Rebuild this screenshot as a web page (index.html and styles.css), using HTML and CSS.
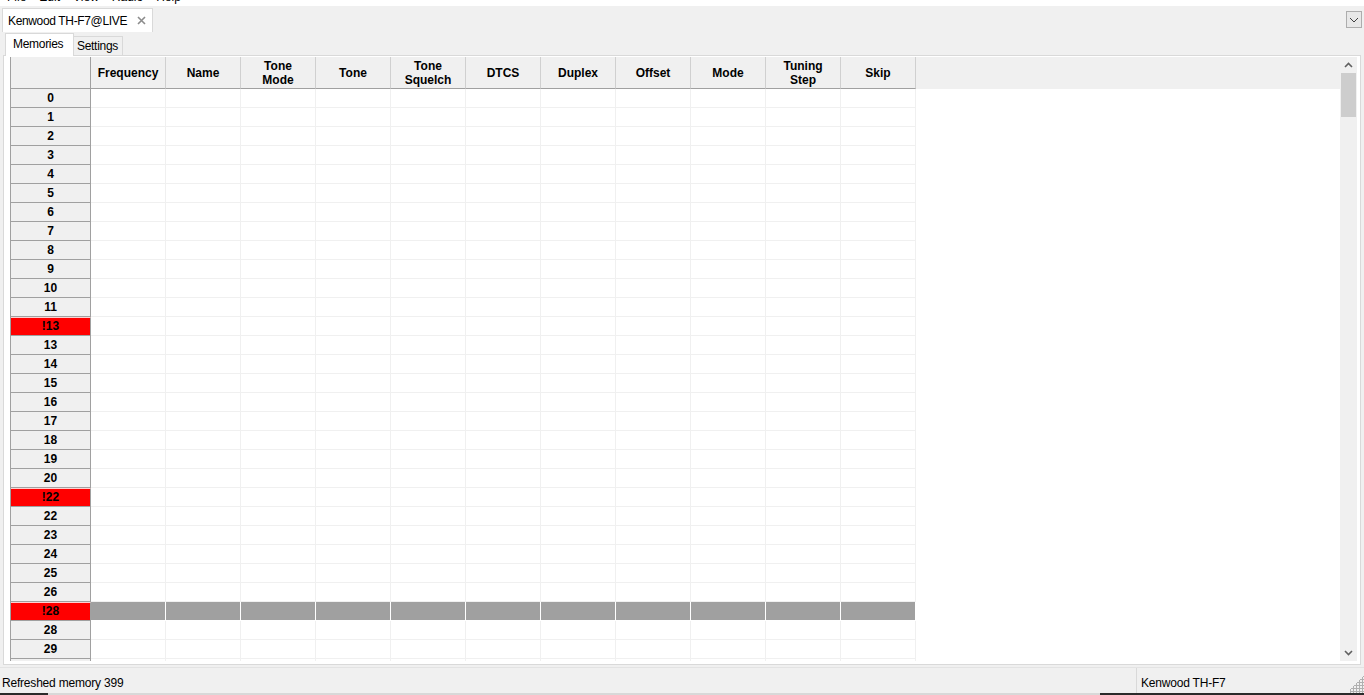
FILE: index.html
```html
<!DOCTYPE html>
<html>
<head>
<meta charset="utf-8">
<link rel="stylesheet" href="styles.css">
</head>
<body>
<div class="menubar"><span>File</span><span>Edit</span><span>View</span><span>Radio</span><span>Help</span></div>
<div class="tabbar">
  <div class="tab"><span class="tabtext">Kenwood TH-F7@LIVE</span><svg class="close" width="9" height="9" viewBox="0 0 9 9"><path d="M1 1 L8 8 M8 1 L1 8" fill="none" stroke="#8c8c8c" stroke-width="1.6"/></svg></div>
  <div class="spacer"></div>
  <div class="ddbtn"><svg width="10" height="6" viewBox="0 0 10 6"><path d="M1 1 L5 5 L9 1" fill="none" stroke="#404040" stroke-width="1"/></svg></div>
</div>
<div class="subtabs">
  <div class="stab active">Memories</div>
  <div class="stab">Settings</div>
</div>
<div class="panel">
  <div class="grid">
    <div class="hrow">
      <div class="corner"></div>
      <div class="hc">Frequency</div><div class="hc">Name</div><div class="hc">Tone<br>Mode</div><div class="hc">Tone</div><div class="hc">Tone<br>Squelch</div><div class="hc">DTCS</div><div class="hc">Duplex</div><div class="hc">Offset</div><div class="hc">Mode</div><div class="hc">Tuning<br>Step</div><div class="hc">Skip</div>
      <div class="hfill"></div>
    </div>
    <div class="r"><div class="rh">0</div><span></span><span></span><span></span><span></span><span></span><span></span><span></span><span></span><span></span><span></span><span></span></div>
    <div class="r"><div class="rh">1</div><span></span><span></span><span></span><span></span><span></span><span></span><span></span><span></span><span></span><span></span><span></span></div>
    <div class="r"><div class="rh">2</div><span></span><span></span><span></span><span></span><span></span><span></span><span></span><span></span><span></span><span></span><span></span></div>
    <div class="r"><div class="rh">3</div><span></span><span></span><span></span><span></span><span></span><span></span><span></span><span></span><span></span><span></span><span></span></div>
    <div class="r"><div class="rh">4</div><span></span><span></span><span></span><span></span><span></span><span></span><span></span><span></span><span></span><span></span><span></span></div>
    <div class="r"><div class="rh">5</div><span></span><span></span><span></span><span></span><span></span><span></span><span></span><span></span><span></span><span></span><span></span></div>
    <div class="r"><div class="rh">6</div><span></span><span></span><span></span><span></span><span></span><span></span><span></span><span></span><span></span><span></span><span></span></div>
    <div class="r"><div class="rh">7</div><span></span><span></span><span></span><span></span><span></span><span></span><span></span><span></span><span></span><span></span><span></span></div>
    <div class="r"><div class="rh">8</div><span></span><span></span><span></span><span></span><span></span><span></span><span></span><span></span><span></span><span></span><span></span></div>
    <div class="r"><div class="rh">9</div><span></span><span></span><span></span><span></span><span></span><span></span><span></span><span></span><span></span><span></span><span></span></div>
    <div class="r"><div class="rh">10</div><span></span><span></span><span></span><span></span><span></span><span></span><span></span><span></span><span></span><span></span><span></span></div>
    <div class="r"><div class="rh">11</div><span></span><span></span><span></span><span></span><span></span><span></span><span></span><span></span><span></span><span></span><span></span></div>
    <div class="r"><div class="rh err">!13</div><span></span><span></span><span></span><span></span><span></span><span></span><span></span><span></span><span></span><span></span><span></span></div>
    <div class="r"><div class="rh">13</div><span></span><span></span><span></span><span></span><span></span><span></span><span></span><span></span><span></span><span></span><span></span></div>
    <div class="r"><div class="rh">14</div><span></span><span></span><span></span><span></span><span></span><span></span><span></span><span></span><span></span><span></span><span></span></div>
    <div class="r"><div class="rh">15</div><span></span><span></span><span></span><span></span><span></span><span></span><span></span><span></span><span></span><span></span><span></span></div>
    <div class="r"><div class="rh">16</div><span></span><span></span><span></span><span></span><span></span><span></span><span></span><span></span><span></span><span></span><span></span></div>
    <div class="r"><div class="rh">17</div><span></span><span></span><span></span><span></span><span></span><span></span><span></span><span></span><span></span><span></span><span></span></div>
    <div class="r"><div class="rh">18</div><span></span><span></span><span></span><span></span><span></span><span></span><span></span><span></span><span></span><span></span><span></span></div>
    <div class="r"><div class="rh">19</div><span></span><span></span><span></span><span></span><span></span><span></span><span></span><span></span><span></span><span></span><span></span></div>
    <div class="r"><div class="rh">20</div><span></span><span></span><span></span><span></span><span></span><span></span><span></span><span></span><span></span><span></span><span></span></div>
    <div class="r"><div class="rh err">!22</div><span></span><span></span><span></span><span></span><span></span><span></span><span></span><span></span><span></span><span></span><span></span></div>
    <div class="r"><div class="rh">22</div><span></span><span></span><span></span><span></span><span></span><span></span><span></span><span></span><span></span><span></span><span></span></div>
    <div class="r"><div class="rh">23</div><span></span><span></span><span></span><span></span><span></span><span></span><span></span><span></span><span></span><span></span><span></span></div>
    <div class="r"><div class="rh">24</div><span></span><span></span><span></span><span></span><span></span><span></span><span></span><span></span><span></span><span></span><span></span></div>
    <div class="r"><div class="rh">25</div><span></span><span></span><span></span><span></span><span></span><span></span><span></span><span></span><span></span><span></span><span></span></div>
    <div class="r"><div class="rh">26</div><span></span><span></span><span></span><span></span><span></span><span></span><span></span><span></span><span></span><span></span><span></span></div>
    <div class="r sel"><div class="rh err">!28</div><span></span><span></span><span></span><span></span><span></span><span></span><span></span><span></span><span></span><span></span><span></span></div>
    <div class="r"><div class="rh">28</div><span></span><span></span><span></span><span></span><span></span><span></span><span></span><span></span><span></span><span></span><span></span></div>
    <div class="r"><div class="rh">29</div><span></span><span></span><span></span><span></span><span></span><span></span><span></span><span></span><span></span><span></span><span></span></div>
    <div class="r"><div class="rh">30</div><span></span><span></span><span></span><span></span><span></span><span></span><span></span><span></span><span></span><span></span><span></span></div>
  </div>
  <div class="vscroll">
    <div class="arrow"><svg width="9" height="6" viewBox="0 0 9 6"><path d="M1 5 L4.5 1.5 L8 5" fill="none" stroke="#606060" stroke-width="1.6"/></svg></div>
    <div class="thumb"></div>
    <div class="track"></div>
    <div class="arrow"><svg width="9" height="6" viewBox="0 0 9 6"><path d="M1 1 L4.5 4.5 L8 1" fill="none" stroke="#606060" stroke-width="1.6"/></svg></div>
  </div>
</div>
<div class="statusbar">
  <div class="smsg">Refreshed memory 399</div>
  <div class="sradio">Kenwood TH-F7</div>
  <div class="grip"></div>
</div>
<div class="taskstrip"><div class="dark1"></div><div class="light"></div><div class="dark2"></div></div>
</body>
</html>
```
FILE: styles.css
```css
* { box-sizing: border-box; }
html, body { margin: 0; padding: 0; }
body {
  width: 1364px;
  height: 695px;
  overflow: hidden;
  background: #f0f0f0;
  font-family: "Liberation Sans", Arial, sans-serif;
  font-size: 12px;
  color: #000;
}
.menubar {
  height: 6px;
  background: #fff;
  overflow: hidden;
  display: flex;
  padding-left: 7px;
}
.menubar span {
  margin-top: -10px;
  margin-right: 13px;
  line-height: 14px;
  color: #000;
}
.tabbar {
  height: 26px;
  display: flex;
  align-items: flex-end;
  background: #f0f0f0;
}
.tab {
  margin-left: 2px;
  height: 24px;
  width: 151px;
  background: #fff;
  border: 1px solid #d9d9d9;
  border-bottom: none;
  padding-left: 5px;
  display: flex;
  align-items: center;
}
.tabtext { letter-spacing: -0.35px; }
.close { margin-left: 10px; }
.spacer { flex: 1; }
.ddbtn {
  width: 16px;
  height: 17px;
  margin-right: 2px;
  margin-bottom: 4px;
  border: 1px solid #adadad;
  background: #e8e8e8;
  display: flex;
  align-items: center;
  justify-content: center;
}
.subtabs {
  height: 23px;
  display: flex;
  align-items: flex-end;
  padding-left: 5px;
  position: relative;
  z-index: 1;
}
.stab {
  border: 1px solid #d9d9d9;
  border-bottom: none;
  height: 19px;
  width: 50px;
  padding: 0 0 0 3px;
  display: flex;
  align-items: center;
  background: #f0f0f0;
  margin-left: -1px;
  letter-spacing: -0.3px;
}
.stab.active {
  height: 23px;
  margin-bottom: -1px;
  background: #fff;
  padding: 0 0 2px 7px;
  width: 69px;
  margin-left: 0;
}
.panel {
  height: 610px;
  margin: 0 3px;
  background: #fff;
  border: 1px solid #d9d9d9;
  padding: 1px 3px 3px 6px;
  display: flex;
}
.grid {
  flex: 1;
  height: 604px;
  overflow: hidden;
  border-left: 1px solid #a0a0a0;
}
.hrow {
  height: 32px;
  display: flex;
  background: #f0f0f0;
}
.corner {
  width: 80px;
  border-right: 1px solid #a0a0a0;
  border-bottom: 1px solid #a0a0a0;
}
.hc {
  width: 75px;
  border-right: 1px solid #d0d0d0;
  border-bottom: 1px solid #a0a0a0;
  display: flex;
  align-items: center;
  justify-content: center;
  text-align: center;
  font-weight: bold;
  line-height: 14px;
}
.hfill { flex: 1; }
.r {
  height: 19px;
  display: flex;
}
.rh {
  width: 80px;
  background: #f0f0f0;
  border-right: 1px solid #a0a0a0;
  border-bottom: 1px solid #a0a0a0;
  font-weight: bold;
  text-align: center;
  line-height: 18px;
}
.rh.err {
  background: #ff0000;
  border-top: 1px solid #ffd0d0;
  line-height: 16px;
}
.r span {
  width: 75px;
  border-right: 1px solid #f0f0f0;
  border-bottom: 1px solid #f0f0f0;
}
.r.sel span {
  background: #a0a0a0;
  border-right: 1px solid #fff;
  border-bottom: 1px solid #fff;
}
.vscroll {
  width: 17px;
  height: 604px;
  background: #f0f0f0;
  display: flex;
  flex-direction: column;
}
.arrow {
  height: 16px;
  display: flex;
  align-items: center;
  justify-content: center;
}
.thumb {
  height: 44px;
  margin: 0 1px;
  background: #cdcdcd;
}
.track { flex: 1; }
.statusbar {
  margin-top: 2px;
  height: 26px;
  display: flex;
  align-items: stretch;
  border-top: 1px solid #e3e3e3;
}
.smsg {
  flex: 1;
  padding-left: 2px;
  padding-top: 8px;
  letter-spacing: -0.2px;
}
.sradio {
  width: 214px;
  border-left: 1px solid #d9d9d9;
  padding-left: 4px;
  padding-top: 8px;
  letter-spacing: -0.2px;
}
.grip {
  width: 14px;
  background-image: radial-gradient(circle, #b0b0b0 1px, transparent 1.2px);
  background-size: 3px 3px;
  background-position: right bottom;
  background-repeat: repeat;
  mask-image: linear-gradient(135deg, transparent 55%, #000 55%);
  -webkit-mask-image: linear-gradient(135deg, transparent 55%, #000 55%);
}
.taskstrip {
  height: 2px;
  display: flex;
}
.dark1 { width: 48px; background: #2b2b2b; }
.light { flex: 1; background: #d8d8d8; }
.dark2 { width: 264px; background: #2b2b2b; }
```
